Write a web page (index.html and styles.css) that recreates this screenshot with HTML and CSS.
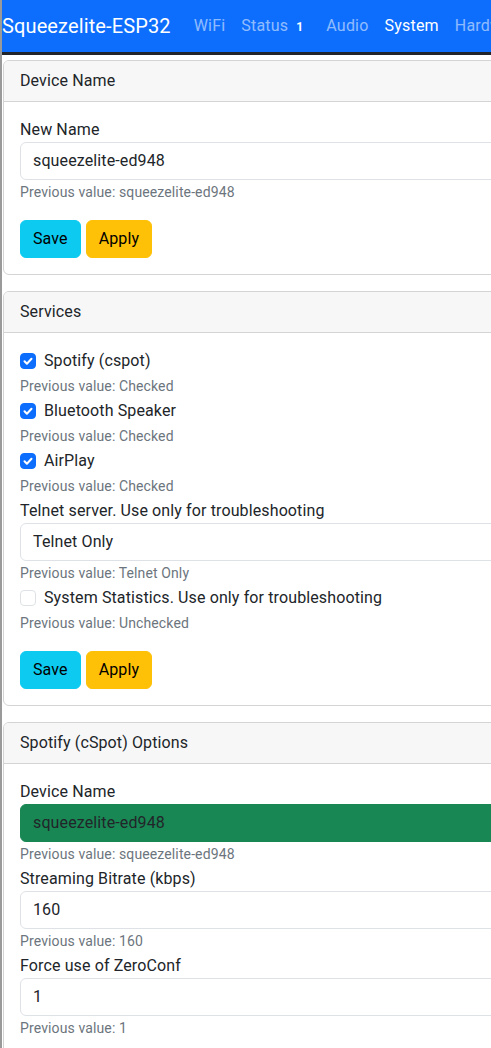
FILE: index.html
```html
<!DOCTYPE html>
<html lang="en">
<head>
<meta charset="utf-8">
<title>Squeezelite-ESP32</title>
<link rel="stylesheet" href="styles.css">
</head>
<body>
<div class="app">
  <nav class="navbar">
    <span class="brand">Squeezelite-ESP32</span>
    <ul class="nav">
      <li><a class="nav-link">WiFi</a></li>
      <li><a class="nav-link nav-link-badge">Status<span class="badge">1</span></a></li>
      <li><a class="nav-link">Audio</a></li>
      <li><a class="nav-link active">System</a></li>
      <li><a class="nav-link">Hardware</a></li>
    </ul>
  </nav>

  <main class="content">
    <section class="card">
      <div class="card-header">Device Name</div>
      <div class="card-body">
        <label class="form-label">New Name</label>
        <div class="form-control">squeezelite-ed948</div>
        <div class="form-text">Previous value: squeezelite-ed948</div>
        <div class="actions">
          <button class="btn btn-info">Save</button>
          <button class="btn btn-warning">Apply</button>
        </div>
      </div>
    </section>

    <section class="card">
      <div class="card-header">Services</div>
      <div class="card-body">
        <div class="form-check"><span class="check checked"><svg viewBox="0 0 16 16" width="16" height="16"><path d="M4.5 8.3l2.4 2.4 4.6-4.9" fill="none" stroke="#fff" stroke-width="2" stroke-linecap="round" stroke-linejoin="round"/></svg></span><span>Spotify (cspot)</span></div>
        <div class="form-text">Previous value: Checked</div>
        <div class="form-check"><span class="check checked"><svg viewBox="0 0 16 16" width="16" height="16"><path d="M4.5 8.3l2.4 2.4 4.6-4.9" fill="none" stroke="#fff" stroke-width="2" stroke-linecap="round" stroke-linejoin="round"/></svg></span><span>Bluetooth Speaker</span></div>
        <div class="form-text">Previous value: Checked</div>
        <div class="form-check"><span class="check checked"><svg viewBox="0 0 16 16" width="16" height="16"><path d="M4.5 8.3l2.4 2.4 4.6-4.9" fill="none" stroke="#fff" stroke-width="2" stroke-linecap="round" stroke-linejoin="round"/></svg></span><span>AirPlay</span></div>
        <div class="form-text">Previous value: Checked</div>
        <label class="form-label">Telnet server. Use only for troubleshooting</label>
        <div class="form-control">Telnet Only</div>
        <div class="form-text">Previous value: Telnet Only</div>
        <div class="form-check"><span class="check"></span><span>System Statistics. Use only for troubleshooting</span></div>
        <div class="form-text">Previous value: Unchecked</div>
        <div class="actions">
          <button class="btn btn-info">Save</button>
          <button class="btn btn-warning">Apply</button>
        </div>
      </div>
    </section>

    <section class="card">
      <div class="card-header">Spotify (cSpot) Options</div>
      <div class="card-body">
        <label class="form-label">Device Name</label>
        <div class="form-control changed">squeezelite-ed948</div>
        <div class="form-text">Previous value: squeezelite-ed948</div>
        <label class="form-label">Streaming Bitrate (kbps)</label>
        <div class="form-control">160</div>
        <div class="form-text">Previous value: 160</div>
        <label class="form-label">Force use of ZeroConf</label>
        <div class="form-control">1</div>
        <div class="form-text">Previous value: 1</div>
      </div>
    </section>
  </main>
</div>
</body>
</html>
```

FILE: styles.css
```css
html, body {
  margin: 0;
  padding: 0;
  overflow: hidden;
  background: #fff;
}

body {
  font-family: "Roboto", "Noto Sans", sans-serif;
  font-size: 16px;
  line-height: 24px;
  letter-spacing: 0.12px;
  color: #212529;
}

.app {
  border-left: 2px solid #9a9a9a;
  min-height: 1048px;
  width: 760px;
}

.navbar {
  display: flex;
  align-items: center;
  height: 52px;
  background: #0d6efd;
  border-bottom: 3px solid #212529;
  white-space: nowrap;
}

.brand {
  font-size: 20px;
  color: #fff;
  margin-right: 15px;
  line-height: 30px;
}

.nav {
  display: flex;
  list-style: none;
  margin: 0;
  padding: 0;
}

.nav-link {
  display: block;
  padding: 8px;
  color: rgba(255, 255, 255, 0.55);
  text-decoration: none;
  letter-spacing: 0.2px;
}

.nav-link.active {
  color: #fff;
}

.badge {
  font-size: 12px;
  font-weight: 700;
  color: #fff;
  padding: 0 7px 0 8px;
}

.content {
  padding: 5px 0 0 1px;
  display: flex;
  flex-direction: column;
  gap: 16px;
}

.card {
  border: 1px solid #d4d4d4;
  border-radius: 6px;
  background: #fff;
  overflow: hidden;
}

.card-header {
  background: #f7f7f7;
  padding: 8px 16px;
  border-bottom: 1px solid #d4d4d4;
}

.card-body {
  padding: 16px;
  display: flex;
  flex-direction: column;
  align-items: flex-start;
}

.form-label {
  display: block;
}

.form-control {
  box-sizing: border-box;
  align-self: stretch;
  height: 38px;
  padding: 6px 12px;
  border: 1px solid #dee2e6;
  border-radius: 6px;
  background: #fff;
}

.form-control.changed {
  background: #198754;
  border-color: #198754;
}

.form-text {
  margin-top: 3px;
  margin-bottom: 3px;
  font-size: 14px;
  line-height: 19px;
  color: #6c757d;
}

.form-check {
  display: flex;
  align-items: center;
  gap: 8px;
  height: 24px;
  margin-bottom: 1px;
}

.check {
  box-sizing: border-box;
  width: 16px;
  height: 16px;
  border: 1px solid #dee2e6;
  border-radius: 4px;
  background: #fff;
  display: flex;
}

.check.checked {
  background: #0d6efd;
  border-color: #0d6efd;
}

.check svg {
  margin: -1px;
}

.actions {
  display: flex;
  gap: 5px;
  margin-top: 15px;
}

.btn {
  font-family: inherit;
  font-size: 16px;
  line-height: 24px;
  letter-spacing: 0.12px;
  padding: 6px 12px;
  border: 1px solid transparent;
  border-radius: 6px;
  color: #000;
}

.btn-info {
  background: #0dcaf0;
  border-color: #0dcaf0;
}

.btn-warning {
  background: #ffc107;
  border-color: #ffc107;
}
```
